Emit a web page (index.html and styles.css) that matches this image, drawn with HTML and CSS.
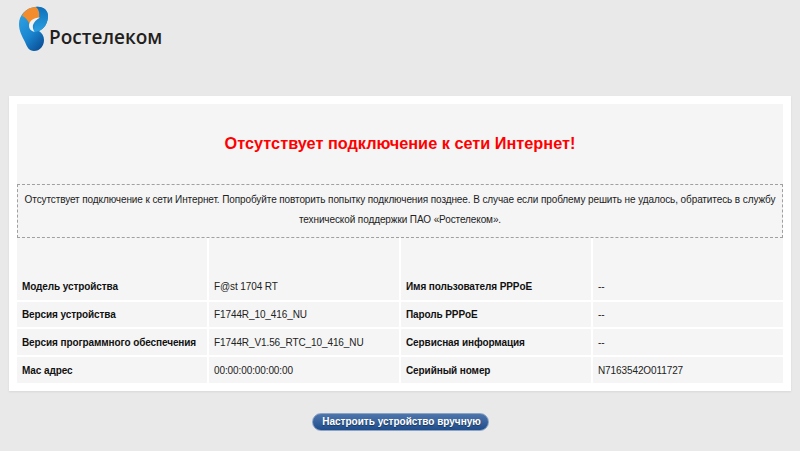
FILE: index.html
```html
<!DOCTYPE html>
<html lang="en">
<head>
    <meta charset="UTF-8">
    <title>Ростелеком</title>
    <link rel="stylesheet" href="styles.css">
</head>
<body>
    <div class="header">
        <div class="logo">
            <svg class="logo-mark" width="30" height="46" viewBox="0 0 30 46">
                <defs>
                    <linearGradient id="blue" x1="0" y1="0" x2="0.7" y2="1">
                        <stop offset="0" stop-color="#35a8e6"/>
                        <stop offset="0.6" stop-color="#1a86d0"/>
                        <stop offset="1" stop-color="#0a4f96"/>
                    </linearGradient>
                    <linearGradient id="right" x1="0" y1="0" x2="0" y2="1">
                        <stop offset="0" stop-color="#0f6fb8"/>
                        <stop offset="1" stop-color="#2aa0e2"/>
                    </linearGradient>
                </defs>
                <path fill="url(#blue)" d="M16 1C7 2 0 9 0 18C0 25 3 30 6 36C8 41 10 45 15 45C21 45 25 40 25 34C25 30 23 27 20 25C25 23 29 17 29 10C29 4 23 0 16 1z"/>
                <path fill="#f28c2c" d="M17 1C10 1 5 5 3 10C6 11 9 14 10.5 18C12 15 15 13 20 12C21 8 20 3 17 1z"/>
                <path fill="url(#right)" d="M17 1C24 0 29 4 29 10C29 17 25 23 20 25L15 26C15 22 15 18 20 12C21 8 20 3 17 1z"/>
                <path fill="#f2f2f2" d="M21 11.500C14 12 10 15 10 20C10 23 12 25 15.500 26C14 23 13.500 21 14 19C15 16 17 14 21 11.500z"/>
            </svg>
            <span class="logo-text">Ростелеком</span>
        </div>
    </div>

    <div class="card">
        <div class="title-box">
            <h1>Отсутствует подключение к сети Интернет!</h1>
        </div>
        <div class="message">
            Отсутствует подключение к сети Интернет. Попробуйте повторить попытку подключения позднее. В случае если проблему решить не удалось, обратитесь в службу технической поддержки ПАО «Ростелеком».
        </div>
        <table class="info">
            <tr class="first">
                <td class="name">Модель устройства</td>
                <td>F@st 1704 RT</td>
                <td class="name">Имя пользователя PPPoE</td>
                <td>--</td>
            </tr>
            <tr class="short">
                <td class="name">Версия устройства</td>
                <td>F1744R_10_416_NU</td>
                <td class="name">Пароль PPPoE</td>
                <td>--</td>
            </tr>
            <tr>
                <td class="name">Версия программного обеспечения</td>
                <td>F1744R_V1.56_RTC_10_416_NU</td>
                <td class="name">Сервисная информация</td>
                <td>--</td>
            </tr>
            <tr>
                <td class="name">Мас адрес</td>
                <td>00:00:00:00:00:00</td>
                <td class="name">Серийный номер</td>
                <td>N7163542O011727</td>
            </tr>
        </table>
    </div>

    <div class="actions">
        <a class="button" href="#">Настроить устройство вручную</a>
    </div>
</body>
</html>
```

FILE: styles.css
```css
html, body {
    height: 100%;
}
body {
    margin: 0;
    padding: 0 9px;
    background-color: #e9e9e9;
    font-family: "Liberation Sans", Arial, sans-serif;
    font-size: 10px;
    letter-spacing: -0.1px;
    color: #222;
    overflow: hidden;
}
.header {
    height: 96px;
    padding: 6px 0 0 10px;
    box-sizing: border-box;
}
.logo {
    display: flex;
    align-items: flex-start;
}
.logo-mark {
    flex: none;
}
.logo-text {
    margin: 19px 0 0 0;
    font-family: "Open Sans", sans-serif;
    font-weight: 600;
    font-size: 19px;
    line-height: 24px;
    letter-spacing: 0;
    color: #231f20;
}
.card {
    background-color: #fff;
    padding: 8px;
    box-shadow: 0 1px 2px rgba(0, 0, 0, 0.08);
}
.title-box {
    height: 80px;
    display: flex;
    align-items: center;
    justify-content: center;
    background-color: #f5f5f5;
}
h1 {
    margin: 0 0 1px;
    font-size: 16.3px;
    font-weight: bold;
    letter-spacing: 0;
    color: #f00;
}
.message {
    box-sizing: border-box;
    height: 54px;
    padding: 5px 6px;
    border: 1px dashed #a0a0a0;
    background-color: #f5f5f5;
    text-align: center;
    line-height: 20px;
}
.info {
    border-collapse: separate;
    border-spacing: 2px 0;
    margin: 0 -2px;
    width: calc(100% + 4px);
    table-layout: fixed;
}
.info td {
    height: 26px;
    padding: 0 5px;
    background-color: #f5f5f5;
    border-top: 2px solid #fff;
    vertical-align: middle;
}
.info .first td {
    border-top: 0;
    padding: 35px 5px 1px;
}
.info .short td {
    height: 25px;
}
.info td.name {
    font-weight: bold;
    color: #111;
}
.actions {
    display: flex;
    justify-content: center;
    padding-top: 22px;
}
.button {
    box-sizing: border-box;
    width: 177px;
    height: 18px;
    padding-left: 3px;
    border: 1px solid #8ba3c4;
    border-radius: 9px;
    background: linear-gradient(#4f76ac, #1f4d8c);
    color: #fff;
    font-weight: bold;
    font-size: 10px;
    letter-spacing: 0;
    line-height: 16px;
    text-align: center;
    text-decoration: none;
    text-shadow: 0 1px 1px rgba(0, 0, 0, 0.4);
}
```
